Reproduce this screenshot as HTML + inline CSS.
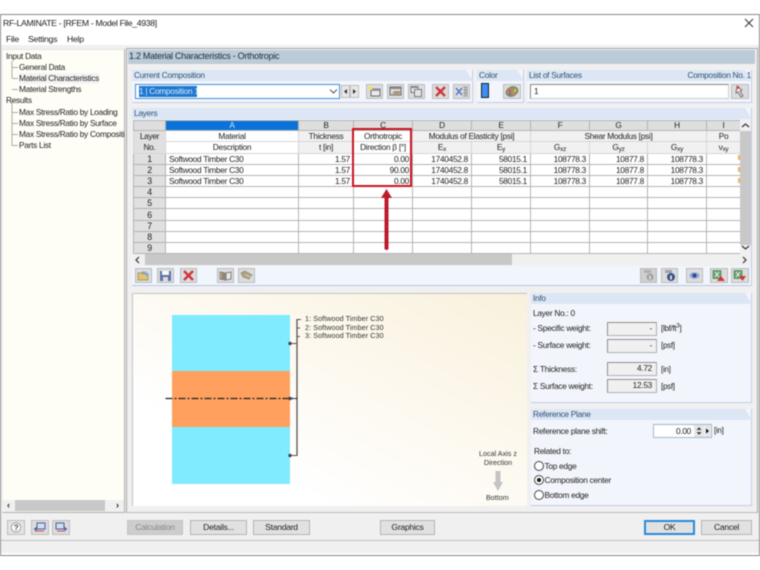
<!DOCTYPE html>
<html><head><meta charset="utf-8"><title>RF-LAMINATE</title>
<style>
html,body{margin:0;padding:0;background:#fff}
#w{position:relative;width:760px;height:570px;overflow:hidden;background:#fff;font:8.3px "Liberation Sans",sans-serif;letter-spacing:-.28px;color:#222;filter:blur(.4px)}
#w div,#w span.a{position:absolute;box-sizing:border-box}
.t{position:absolute;white-space:nowrap;line-height:11px}
.g{background:#f2f5fb;border-right:1px solid #c4cdea;border-bottom:1px solid #c4cdea}
.gh{background:#dce6f5;color:#2f5170;line-height:11px;padding-left:2px;clip-path:polygon(0 0,calc(100% - 7px) 0,100% 100%,0 100%)}
.b{background:#dcdcdc;border:1px solid #bdbdbd}
.b svg{position:absolute;left:0;top:0;opacity:.85}
.btn{background:#e1e1e1;border:1px solid #b4b4b4;text-align:center;line-height:13px;height:15px;top:520px;font-size:8.6px}
.in{background:#f0f0f0;border:1px solid #8f8f8f;border-right-color:#b0b0b0;border-bottom-color:#b0b0b0;text-align:right;padding-right:4px;line-height:11px}
.r{border:1px solid #444;border-radius:50%;width:10px;height:10px;background:#fff;left:534px}
table{position:absolute;left:133px;top:119.500px;border-collapse:collapse;table-layout:fixed;width:607px;font-size:8.3px}
td{border:1px solid #b4b4b4;padding:0 3px;height:10.200px;line-height:10px;overflow:hidden;white-space:nowrap;text-align:right;background:#fff}
td.n{text-align:center;background:#e0e0e0;padding:0;font-size:8.800px}
td.l{text-align:left}
tr.h td{background:#dedede;text-align:center;height:9px;line-height:8px;padding:0}
tr.h td.s{background:#0a72d8;color:#cfe4fa}
tr.m td{background:#f1f1f1;text-align:center;padding:0;height:10px;border-color:#d6d6d6}
tr.m td.w{background:#fff}
tr.m td.n{background:#e0e0e0}
sub{font-size:6.500px;vertical-align:baseline;position:relative;top:1px;line-height:0}
</style></head><body><div id="w">
<!-- window -->
<div style="left:0;top:14px;width:760px;height:542px;border:1px solid #8a8a8a;background:#fff"></div>
<div style="left:1px;top:45px;width:758px;height:510px;background:#f0f0f0"></div>
<span class="t" style="left:3px;top:18px;font-size:8.700px;letter-spacing:-.33px">RF-LAMINATE - [RFEM - Model File_4938]</span>
<svg style="position:absolute;left:744px;top:18px" width="10" height="10"><path d="M1 1L9 9M9 1L1 9" stroke="#333" stroke-width="1" fill="none"/></svg>
<span class="t" style="left:6px;top:34px;font-size:8.700px">File</span>
<span class="t" style="left:28px;top:34px;font-size:8.700px">Settings</span>
<span class="t" style="left:67px;top:34px;font-size:8.700px">Help</span>
<!-- left nav -->
<div style="left:2px;top:49px;width:123px;height:464px;background:#fffef6;border:1px solid #b0b0b0;border-left-color:#f0f0f0;border-top-color:#e4e4e4"></div>
<svg style="position:absolute;left:0;top:0" width="125" height="160"><path d="M12 61V78M12 67.500H18M12 78.500H18M12 89.500H18M12 101V146M12 112.500H18M12 123.500H18M12 134.500H18M12 145.500H18" stroke="#aaa" stroke-width="1" fill="none"/></svg>
<span class="t" style="left:6px;top:51px">Input Data</span>
<span class="t" style="left:19px;top:62px">General Data</span>
<span class="t" style="left:19px;top:73px;background:#f4f4f4">Material Characteristics</span>
<span class="t" style="left:19px;top:84px">Material Strengths</span>
<span class="t" style="left:6px;top:95px">Results</span>
<span class="t" style="left:19px;top:107px">Max Stress/Ratio by Loading</span>
<span class="t" style="left:19px;top:118px">Max Stress/Ratio by Surface</span>
<span class="t" style="left:19px;top:129px;width:105px;overflow:hidden">Max Stress/Ratio by Composition</span>
<span class="t" style="left:19px;top:140px">Parts List</span>
<div style="left:3px;top:500px;width:121px;height:12px;background:#f0f0f0"></div>
<div style="left:15px;top:500px;width:90px;height:11px;background:#c8c8c8"></div>
<span class="t" style="left:7px;top:500px;font-weight:bold;font-size:9px">‹</span>
<span class="t" style="left:116px;top:500px;font-weight:bold;font-size:9px">›</span>
<!-- right panel -->
<div style="left:126px;top:48px;width:632px;height:465px;border:1px solid #a8a8a8;border-bottom-color:#bbb;background:#f0f0f0"></div>
<div style="left:128px;top:50px;width:627px;height:14px;background:#bccbd8"></div>
<span class="t" style="left:129px;top:51px;font-size:9px;letter-spacing:-.27px;color:#1d2c3a">1.2 Material Characteristics - Orthotropic</span>
<!-- current composition -->
<div class="g" style="left:132px;top:70px;width:341px;height:33px"></div>
<div class="gh" style="left:132px;top:70px;width:341px;height:11px">Current Composition</div>
<div style="left:135px;top:84px;width:205px;height:15px;background:#fff;border:1px solid #3f8fd8"></div>
<div style="left:139px;top:86px;width:58px;height:11px;background:#1f78d0"></div>
<span class="t" style="left:139px;top:86px;color:#d8e8f8">1 | Composition 1</span>
<svg style="position:absolute;left:329px;top:88px" width="9" height="7"><path d="M1 1.500L4.500 5L8 1.500" stroke="#555" fill="none"/></svg>
<div class="b" style="left:341px;top:85px;width:9px;height:13px;background:#e8e8e8"><svg width="7" height="11"><path d="M5 3V8L2 5.500Z" fill="#111"/></svg></div>
<div class="b" style="left:350px;top:85px;width:9px;height:13px;background:#e8e8e8"><svg width="7" height="11"><path d="M2 3V8L5 5.500Z" fill="#111"/></svg></div>
<div class="b" style="left:366px;top:84px;width:17px;height:15px"><svg width="15" height="13"><rect x="4" y="4" width="9" height="7" fill="#eee" stroke="#555"/><rect x="4" y="4" width="9" height="2" fill="#889"/><circle cx="3.500" cy="3" r="2" fill="#f4e24a"/></svg></div>
<div class="b" style="left:387px;top:84px;width:17px;height:15px"><svg width="15" height="13"><rect x="2" y="2" width="11" height="8" fill="#ddd" stroke="#555"/><rect x="2" y="2" width="11" height="2" fill="#778"/><path d="M4 8L7 6H12V9H6Z" fill="#a98650"/></svg></div>
<div class="b" style="left:408px;top:84px;width:17px;height:15px"><svg width="15" height="13"><rect x="2" y="1.500" width="7" height="6" fill="#eee" stroke="#667"/><rect x="5.500" y="4.500" width="7" height="7" fill="#e6e6e6" stroke="#667"/><rect x="2" y="1" width="7" height="2" fill="#778"/></svg></div>
<div class="b" style="left:432px;top:84px;width:17px;height:15px"><svg width="15" height="13"><path d="M3 2L12 11M12 2L3 11" stroke="#cc1a22" stroke-width="2.400"/></svg></div>
<div class="b" style="left:453px;top:84px;width:17px;height:15px"><svg width="15" height="13"><path d="M9 2H13V11H9M9 5H13M9 8H13M11 2V11" stroke="#8a8a8a" fill="none"/><path d="M2 3L8 10M8 3L2 10" stroke="#3a6cc0" stroke-width="1.500"/></svg></div>
<!-- color -->
<div class="g" style="left:477px;top:70px;width:47px;height:33px"></div>
<div class="gh" style="left:477px;top:70px;width:47px;height:11px">Color</div>
<div style="left:481px;top:83px;width:8px;height:15px;background:#3f8ef0;border:1px solid #123"></div>
<div class="b" style="left:503px;top:84px;width:18px;height:15px"><svg width="16" height="13"><ellipse cx="8" cy="6.500" rx="6" ry="4.500" fill="#a8844e" stroke="#665" transform="rotate(-25 8 6.500)"/><circle cx="6" cy="6" r="1.200" fill="#d33"/><circle cx="9" cy="4.500" r="1.200" fill="#3a4"/><circle cx="11" cy="5.500" r="1" fill="#fd3"/><circle cx="6" cy="9" r="1.200" fill="#35c"/></svg></div>
<!-- surfaces -->
<div class="g" style="left:527px;top:70px;width:225px;height:33px"></div>
<div class="gh" style="left:527px;top:70px;width:225px;height:11px">List of Surfaces</div>
<span class="t" style="right:9px;top:70px;color:#2f5170">Composition No. 1</span>
<div style="left:530px;top:84px;width:199px;height:15px;background:#fff;border:1px solid #888;border-right-color:#ccc;border-bottom-color:#ccc"></div>
<span class="t" style="left:534px;top:86px">1</span>
<div class="b" style="left:731px;top:84px;width:18px;height:15px"><svg width="16" height="13"><path d="M5 1L10 5L8 6L11 11L9 12L6 7L4 8Z" fill="#eee" stroke="#444" stroke-width=".8"/><circle cx="6" cy="2.500" r="1.500" fill="#c33"/></svg></div>
<!-- layers -->
<div class="g" style="left:132px;top:108px;width:620px;height:178px;background:#f2f5fb"></div>
<div class="gh" style="left:132px;top:108px;width:620px;height:11px">Layers</div>
<table><colgroup><col style="width:32px"><col style="width:133px"><col style="width:55px"><col style="width:59px"><col style="width:59px"><col style="width:59px"><col style="width:59px"><col style="width:58px"><col style="width:59px"><col style="width:34px"></colgroup>
<tr class="h"><td></td><td class="s">A</td><td>B</td><td>C</td><td>D</td><td>E</td><td>F</td><td>G</td><td>H</td><td>I</td></tr>
<tr class="m"><td class="n" rowspan="2" style="line-height:11px;font-size:8.300px">Layer<br>No.</td><td class="w">Material</td><td>Thickness</td><td class="w">Orthotropic</td><td colspan="2">Modulus of Elasticity [psi]</td><td colspan="3">Shear Modulus [psi]</td><td>Po</td></tr>
<tr class="m"><td class="w">Description</td><td>t [in]</td><td class="w">Direction β [°]</td><td>E<sub>x</sub></td><td>E<sub>y</sub></td><td>G<sub>xz</sub></td><td>G<sub>yz</sub></td><td>G<sub>xy</sub></td><td>ν<sub>xy</sub></td></tr>
<tr><td class="n">1</td><td class="l">Softwood Timber C30</td><td>1.57</td><td>0.00</td><td>1740452.8</td><td>58015.1</td><td>108778.3</td><td>10877.8</td><td>108778.3</td><td></td></tr>
<tr><td class="n">2</td><td class="l">Softwood Timber C30</td><td>1.57</td><td>90.00</td><td>1740452.8</td><td>58015.1</td><td>108778.3</td><td>10877.8</td><td>108778.3</td><td></td></tr>
<tr><td class="n">3</td><td class="l">Softwood Timber C30</td><td>1.57</td><td>0.00</td><td>1740452.8</td><td>58015.1</td><td>108778.3</td><td>10877.8</td><td>108778.3</td><td></td></tr>
<tr><td class="n">4</td><td></td><td></td><td></td><td></td><td></td><td></td><td></td><td></td><td></td></tr>
<tr><td class="n">5</td><td></td><td></td><td></td><td></td><td></td><td></td><td></td><td></td><td></td></tr>
<tr><td class="n">6</td><td></td><td></td><td></td><td></td><td></td><td></td><td></td><td></td><td></td></tr>
<tr><td class="n">7</td><td></td><td></td><td></td><td></td><td></td><td></td><td></td><td></td><td></td></tr>
<tr><td class="n">8</td><td></td><td></td><td></td><td></td><td></td><td></td><td></td><td></td><td></td></tr>
<tr><td class="n">9</td><td></td><td></td><td></td><td></td><td></td><td></td><td></td><td></td><td></td></tr>
</table>
<div style="left:738px;top:155px;width:2px;height:5px;background:#f0b060"></div>
<div style="left:738px;top:167px;width:2px;height:5px;background:#f0b060"></div>
<div style="left:738px;top:178px;width:2px;height:5px;background:#f0b060"></div>
<!-- scrollbars -->
<div style="left:740px;top:119px;width:11px;height:135px;background:#f0f0f0"></div>
<div style="left:740px;top:131px;width:11px;height:114px;background:#c8c8c8"></div>
<svg style="position:absolute;left:741px;top:122px" width="9" height="7"><path d="M1 5L4.500 2L8 5" stroke="#333" fill="none" stroke-width="1.200"/></svg>
<svg style="position:absolute;left:741px;top:244px" width="9" height="7"><path d="M1 2L4.500 5L8 2" stroke="#333" fill="none" stroke-width="1.200"/></svg>
<div style="left:133px;top:254px;width:618px;height:12px;background:#f0f0f0"></div>
<div style="left:145px;top:254px;width:367px;height:11px;background:#c8c8c8"></div>
<svg style="position:absolute;left:134px;top:256px" width="7" height="8"><path d="M5 1L2 4L5 7" stroke="#333" fill="none" stroke-width="1.200"/></svg>
<svg style="position:absolute;left:741px;top:256px" width="7" height="8"><path d="M2 1L5 4L2 7" stroke="#333" fill="none" stroke-width="1.200"/></svg>
<!-- red box & arrow -->
<div style="left:352px;top:128px;width:60px;height:59px;border:2px solid #cc1420"></div>
<svg style="position:absolute;left:378px;top:186px" width="18" height="68"><path d="M8.500 3L14 12H10.500V63Q8.500 65 6.500 63V12H3Z" fill="#bd1a2c"/></svg>
<!-- lower toolbar -->
<div style="left:133px;top:266px;width:618px;height:20px;background:#f1f5fc;border-bottom:1px solid #b8c4e8"></div>
<div class="b" style="left:135px;top:268px;width:17px;height:15px"><svg width="15" height="13"><path d="M2 4H6L7 5H12V11H2Z" fill="#e0c060" stroke="#887a40" stroke-width=".7"/><path d="M5 3Q10 1 13 6L12 8Z" fill="#7da0c8"/></svg></div>
<div class="b" style="left:157px;top:268px;width:17px;height:15px"><svg width="15" height="13"><rect x="2" y="2" width="11" height="10" fill="#47609c"/><rect x="4" y="2" width="7" height="4" fill="#fff"/><rect x="5" y="8" width="5" height="4" fill="#ddd"/></svg></div>
<div class="b" style="left:180px;top:268px;width:17px;height:15px"><svg width="15" height="13"><path d="M3 2L12 11M12 2L3 11" stroke="#cc1a22" stroke-width="2.400"/></svg></div>
<div class="b" style="left:217px;top:268px;width:17px;height:15px"><svg width="15" height="13"><path d="M2 3L7 4V11L2 10ZM13 3L8 4V11L13 10Z" fill="#e8e8e8" stroke="#555" stroke-width=".8"/><path d="M3 3.500L7 4V11L3 10Z" fill="#8a7a5c"/></svg></div>
<div class="b" style="left:238px;top:268px;width:17px;height:15px"><svg width="15" height="13"><path d="M2 4L6 2L13 6L10 10L4 8Z" fill="#a89a68" stroke="#776" stroke-width=".7"/><path d="M6 6L12 8" stroke="#ccc"/></svg></div>
<div class="b" style="left:640px;top:268px;width:17px;height:15px;background:#cfcfcf"><svg width="15" height="13"><rect x="3" y="1" width="7" height="3" fill="#aaa"/><circle cx="9" cy="8" r="3.500" fill="#999"/><rect x="8.300" y="6.500" width="1.400" height="4" fill="#eee"/></svg></div>
<div class="b" style="left:661px;top:268px;width:17px;height:15px"><svg width="15" height="13"><rect x="3" y="1" width="7" height="3" fill="#999"/><circle cx="9" cy="8" r="4" fill="#1c3a7a"/><rect x="8.200" y="6.500" width="1.600" height="4" fill="#fff"/></svg></div>
<div class="b" style="left:686px;top:268px;width:17px;height:15px"><svg width="15" height="13"><ellipse cx="7.500" cy="6.500" rx="5" ry="3.300" fill="#7f9fdc"/><circle cx="7.500" cy="6.500" r="2" fill="#182a70"/></svg></div>
<div class="b" style="left:710px;top:268px;width:18px;height:15px"><svg width="16" height="13"><rect x="2" y="1.500" width="8" height="8" fill="#4e9a5a" stroke="#2c6a3a" stroke-width=".6"/><path d="M4 3L8 8M8 3L4 8" stroke="#fff"/><path d="M10 7L14 12H6Z" fill="#d21a1a"/></svg></div>
<div class="b" style="left:731px;top:268px;width:18px;height:15px"><svg width="16" height="13"><rect x="2" y="1.500" width="8" height="8" fill="#4e9a5a" stroke="#2c6a3a" stroke-width=".6"/><path d="M4 3L8 8M8 3L4 8" stroke="#fff"/><path d="M7 7H14L10.500 12Z" fill="#d21a1a"/></svg></div>
<!-- graphics -->
<div style="left:132px;top:293px;width:395px;height:213px;background:linear-gradient(to top right,#fff 25%,#fdf9ef 60%,#f9f1dd);border:1px solid #c4c4c4;border-right:0;border-bottom:0"></div>
<div style="left:172px;top:315px;width:118px;height:169px;background:#80ebff"></div>
<div style="left:172px;top:371px;width:118px;height:56px;background:#ffa05f"></div>
<svg style="position:absolute;left:160px;top:310px" width="150" height="180">
<path d="M137 9V146" stroke="#555" stroke-width="1.300" fill="none"/>
<path d="M137 9.500H141M137 18H140M137 26.500H140M130 33.500H137M130 88.500H137M130 145.500H137" stroke="#555" stroke-width="1" fill="none"/>
<path d="M5.500 88.500H137" stroke="#222" stroke-width="1.300" stroke-dasharray="7 2 2 2" fill="none"/>
<circle cx="130" cy="33.500" r="1.700" fill="#445"/><circle cx="130" cy="88.500" r="1.700" fill="#445"/><circle cx="130" cy="145.500" r="1.700" fill="#445"/>
</svg>
<span class="t" style="left:305px;top:315px;font-size:7.200px;line-height:8.500px;letter-spacing:.07px;color:#333">1: Softwood Timber C30<br>2: Softwood Timber C30<br>3: Softwood Timber C30</span>
<span class="t" style="left:473px;top:450px;width:50px;text-align:center;font-size:7.200px;line-height:8.500px;letter-spacing:0;color:#333;white-space:normal">Local Axis z<br>Direction</span>
<svg style="position:absolute;left:492px;top:470px" width="12" height="22"><path d="M3.500 1H8.500V12H11L6 21L1 12H3.500Z" fill="#c4c4c4"/></svg>
<span class="t" style="left:486px;top:492px;font-size:7.200px;letter-spacing:0;color:#333">Bottom</span>
<!-- info -->
<div class="g" style="left:531px;top:293px;width:221px;height:110px"></div>
<div class="gh" style="left:531px;top:293px;width:221px;height:11px">Info</div>
<span class="t" style="left:533px;top:308px">Layer No.: 0</span>
<span class="t" style="left:533px;top:323px">- Specific weight:</span>
<span class="t" style="left:533px;top:340px">- Surface weight:</span>
<span class="t" style="left:533px;top:364px">Σ Thickness:</span>
<span class="t" style="left:533px;top:381px">Σ Surface weight:</span>
<div class="in" style="left:607px;top:322px;width:50px;height:14px">-</div>
<div class="in" style="left:607px;top:339px;width:50px;height:14px">-</div>
<div class="in" style="left:607px;top:362px;width:50px;height:14px">4.72</div>
<div class="in" style="left:607px;top:379px;width:50px;height:14px">12.53</div>
<span class="t" style="left:661px;top:323px;font-size:8px">[lbf/ft<sup style="font-size:6px;line-height:0">3</sup>]</span>
<span class="t" style="left:661px;top:340px;font-size:8px">[psf]</span>
<span class="t" style="left:661px;top:364px;font-size:8px">[in]</span>
<span class="t" style="left:661px;top:381px;font-size:8px">[psf]</span>
<!-- reference plane -->
<div class="g" style="left:531px;top:409px;width:221px;height:97px"></div>
<div class="gh" style="left:531px;top:409px;width:221px;height:11px">Reference Plane</div>
<span class="t" style="left:533px;top:426px">Reference plane shift:</span>
<div style="left:653px;top:424px;width:59px;height:14px;background:#fff;border:1px solid #a0b8d0;text-align:right;padding-right:20px;line-height:12px">0.00</div>
<svg style="position:absolute;left:694px;top:425px" width="17" height="12"><rect x="0" y="0" width="10" height="12" fill="#e6e6e6"/><rect x="10.500" y="0" width="6" height="12" fill="#e6e6e6"/><path d="M2.500 5L5 2L7.500 5ZM2.500 7H7.500L5 10Z" fill="#444"/><path d="M12 3.500V8.500L15 6Z" fill="#111"/></svg>
<span class="t" style="left:714px;top:425px;font-size:8px">[in]</span>
<span class="t" style="left:534px;top:446px">Related to:</span>
<div class="r" style="top:461px"></div><span class="t" style="left:544.500px;top:461px">Top edge</span>
<div class="r" style="top:475px"></div><div style="left:537px;top:478px;width:4px;height:4px;border-radius:50%;background:#111"></div><span class="t" style="left:544.500px;top:475px">Composition center</span>
<div class="r" style="top:490px"></div><span class="t" style="left:544.500px;top:490px">Bottom edge</span>
<!-- bottom bar -->
<div class="b" style="left:7px;top:520px;width:18px;height:15px;background:#e4e4e4"><svg width="16" height="13"><circle cx="8" cy="6.500" r="4.800" fill="#fff" stroke="#8a9ab0"/><text x="8" y="9.500" font-size="8" font-weight="bold" text-anchor="middle" fill="#334" font-family="Liberation Sans">?</text></svg></div>
<div class="b" style="left:31px;top:520px;width:18px;height:15px"><svg width="16" height="13"><rect x="5" y="2" width="8" height="6" fill="#cfe0f4" stroke="#2a4a90"/><path d="M9 8H3M5 6L2.500 8L5 10" stroke="#2a4a90" fill="none"/><path d="M3 10H12" stroke="#c33"/></svg></div>
<div class="b" style="left:52px;top:520px;width:18px;height:15px"><svg width="16" height="13"><rect x="3" y="2" width="8" height="6" fill="#cfe0f4" stroke="#2a4a90"/><path d="M7 8H13M11 6L13.500 8L11 10" stroke="#2a4a90" fill="none"/><path d="M4 10H12" stroke="#c33"/></svg></div>
<div class="btn" style="left:127px;width:56px;background:#cdcdcd;color:#888;border-color:#c4c4c4">Calculation</div>
<div class="btn" style="left:190px;width:57px">Details...</div>
<div class="btn" style="left:253px;width:57px">Standard</div>
<div class="btn" style="left:380px;width:55px">Graphics</div>
<div class="btn" style="left:644px;width:51px;border:2px solid #2a8ad8;line-height:11px">OK</div>
<div class="btn" style="left:701px;width:51px">Cancel</div>
<div style="left:1px;top:540px;width:758px;height:1px;background:#c0c0c0"></div>
<div style="left:1px;top:553px;width:758px;height:2px;background:#fff"></div>
</div></body></html>
